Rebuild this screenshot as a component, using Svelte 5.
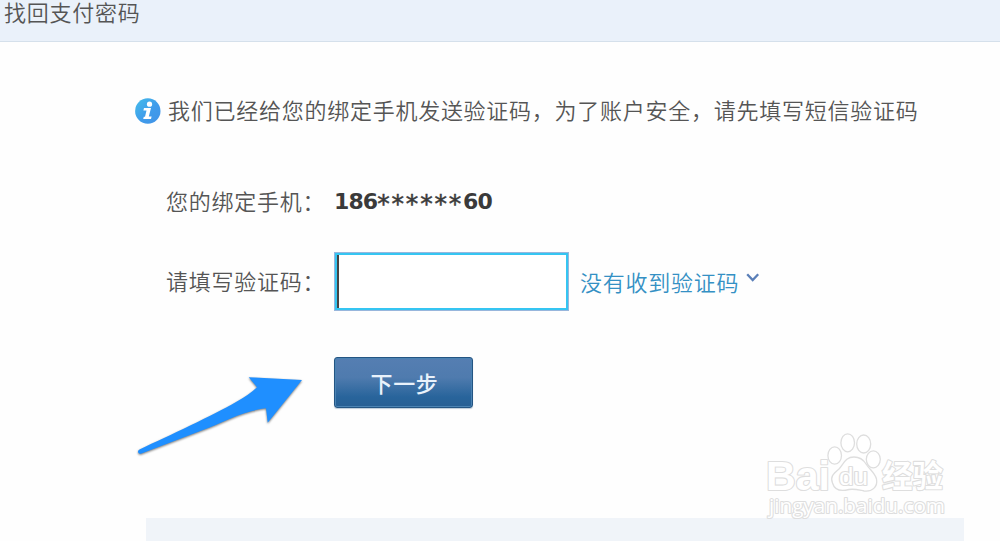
<script>
  let code = $state('');
</script>

<div class="page">
  <header>找回支付密码</header>
  <main>
    <p class="notice">
      <svg class="info" viewBox="0 0 26 26" aria-hidden="true">
        <defs>
          <linearGradient id="infoFill" x1="0" y1="0" x2="1" y2="1">
            <stop offset="0" stop-color="#45bdea" />
            <stop offset=".55" stop-color="#3f9ceb" />
            <stop offset="1" stop-color="#4292e6" />
          </linearGradient>
        </defs>
        <circle cx="12.800" cy="13" r="12.700" fill="url(#infoFill)" />
        <circle cx="14.500" cy="6.200" r="2.600" fill="#fff" />
        <path d="M9 10h7l-2.200 8.500h2.800l-.6 2.600H8.200l.6-2.400H10l1.500-6.200H8.400z" fill="#fff" />
      </svg>
      <span>我们已经给您的绑定手机发送验证码，为了账户安全，请先填写短信验证码</span>
    </p>
    <div class="row phone"><span class="label">您的绑定手机：</span><strong>186<span class="mask">******</span>60</strong></div>
    <div class="row entry">
      <label class="label" for="code">请填写验证码：</label>
      <input id="code" bind:value={code} />
      <a href="#code">没有收到验证码</a>
      <svg class="chevron" viewBox="0 0 14 10" aria-hidden="true"><path d="M1.200 1.200 6.700 7l5.500-5.800" fill="none" stroke="#5a7fb8" stroke-width="2.300" /></svg>
    </div>
    <button>下一步</button>
  </main>
  <footer></footer>

  <svg class="arrow" viewBox="0 0 180 90" aria-hidden="true">
    <path d="M9.500 74.500C40 60 82 41 106 27Q119 20 127 12.300L118.700 2.300 172 5 137.700 47.700 136 33.300C112 36 92 48 73 55L11.500 78.500Q8.500 79.500 8 77Q7.800 75.500 9.500 74.500Z" fill="#1f8fff" />
  </svg>

  <svg class="watermark" viewBox="0 0 190 94">
    <g fill="#fff" stroke="#dedede" stroke-width="1.300">
      <text class="url" x="7" y="83" textLength="176" lengthAdjust="spacingAndGlyphs">jingyan.baidu.com</text>
      <text class="brand" x="4" y="59.500" textLength="64" lengthAdjust="spacingAndGlyphs">Bai</text>
      <ellipse cx="72.700" cy="25.500" rx="6.800" ry="8.700" />
      <ellipse cx="85.700" cy="12.800" rx="6.800" ry="9" />
      <ellipse cx="101.700" cy="14" rx="7" ry="9" />
      <ellipse cx="111.300" cy="29.300" rx="7" ry="8.500" />
      <path d="M92 27C84 27 82 33 77 39C71 44 68 47 70.500 53C73 62 81 61 87 59.500C92 58.500 97 60 102 61C110 62 116 57 114.500 49C113 43 108 40 104 34C101 29 97 27 92 27Z" />
      <text class="du" x="77" y="54.500" textLength="29" lengthAdjust="spacingAndGlyphs">du</text>
      <text class="cn" x="120" y="57" textLength="61" lengthAdjust="spacingAndGlyphs">经验</text>
    </g>
  </svg>
</div>

<style>
  :global(body) { background: #fefefe; }
  .page {
    position: relative;
    display: flex;
    flex-direction: column;
    width: 1000px;
    height: 541px;
    overflow: hidden;
    color: #555;
    background: #fefefe;
    font: 22px/30px "Noto Sans CJK SC", sans-serif;
    font-weight: 350;
    letter-spacing: .74px;
  }
  header {
    box-sizing: border-box;
    height: 42px;
    padding-left: 4px;
    line-height: 22px;
    background: #eaf1fa;
    border-bottom: 1px solid #d5e0eb;
  }
  main { display: flex; flex-direction: column; align-items: flex-start; height: 476px; }
  .notice { display: flex; align-items: center; height: 30px; margin: 52px 0 0 135px; white-space: nowrap; }
  .info { width: 26px; height: 26px; margin: 3px 7px 0 0; }
  .row { display: flex; align-items: center; margin-left: 166px; white-space: nowrap; }
  .phone { height: 30px; margin-top: 61px; }
  .label { width: 168px; }
  strong { padding-top: 4px; color: #3a3a3a; font: bold 22px/30px "DejaVu Sans", sans-serif; letter-spacing: -.9px; }
  .mask { font-size: 25px; font-weight: 400; line-height: 0; letter-spacing: 1.8px; vertical-align: -3px; -webkit-text-stroke: .5px #3a3a3a; }
  .entry { height: 59px; margin-top: 37px; }
  .entry .label { margin-top: -4px; }
  input {
    box-sizing: border-box;
    width: 235px;
    height: 59px;
    padding: 0 8px;
    font: inherit;
    background: #fff;
    border: 1px solid #98b6dc;
    outline: none;
    border-radius: 0;
    box-shadow: inset 0 0 0 2px #35c5f2, inset 4px 0 #444;
  }
  a { margin: -1px 0 0 11px; color: #3490c4; text-decoration: none; }
  .chevron { width: 14px; height: 10px; margin: -8px 0 0 7px; }
  button {
    width: 139px;
    height: 51px;
    margin: 46px 0 0 334px;
    padding: 0 0 1px 2px;
    color: #e9f2fb;
    font: 500 22px/30px "Noto Sans CJK SC", sans-serif;
    letter-spacing: .7px;
    background: linear-gradient(#557eb2, #4f7bae 40%, #28649b 80%, #285f94);
    border: 1px solid #245583;
    border-radius: 3px;
    box-shadow: inset 0 0 0 1px #4b83b3, 0 1px 1px #bdcbd9;
  }
  footer { width: 818px; height: 23px; margin-left: 146px; background: #f0f4f9; }
  .arrow { position: absolute; left: 130px; top: 375px; width: 180px; height: 90px; filter: drop-shadow(0 1px 1px #0008); }
  .watermark { position: absolute; left: 762px; top: 430px; width: 190px; height: 94px; letter-spacing: 0; overflow: visible; }
  .watermark text { paint-order: stroke; stroke-linejoin: round; stroke-width: 2.2; font-family: "Liberation Sans", sans-serif; font-weight: 700; }
  .watermark .brand { font-size: 41px; }
  .watermark .du { font-size: 23px; font-weight: 400; }
  .watermark .cn { font-family: "Noto Sans CJK SC", sans-serif; font-size: 31px; }
  .watermark .url { font-family: "Open Sans", sans-serif; font-weight: 400; font-size: 20px; }
</style>
